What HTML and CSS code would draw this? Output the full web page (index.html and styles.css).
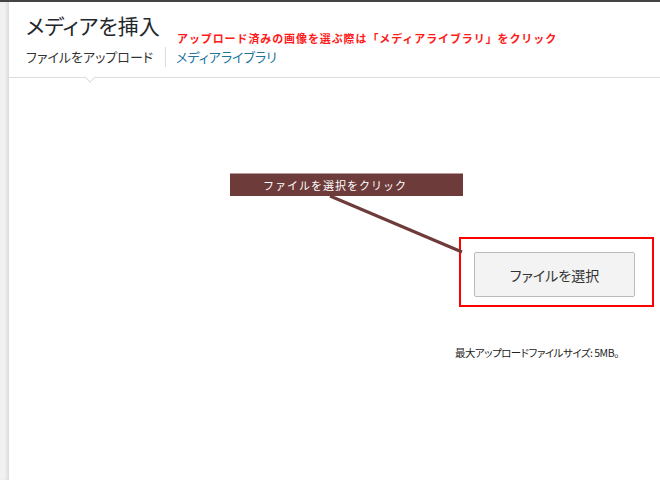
FILE: index.html
```html
<!DOCTYPE html>
<html lang="ja">
<head>
  <meta charset="UTF-8" />
  <title>メディアを挿入</title>
  <link rel="stylesheet" href="styles.css">
</head>
<body>

  <div class="topbar"></div>

  <div class="frame">
    <div class="gutter"></div>

    <div class="modal">
      <!-- header -->
      <div class="modal-head">
        <div class="title-row">
          <h1>メディアを挿入</h1>
          <span class="note">アップロード済みの画像を選ぶ際は「メディアライブラリ」をクリック</span>
        </div>
        <div class="tabs">
          <span class="tab active">ファイルをアップロード</span>
          <span class="tab-sep"></span>
          <span class="tab link">メディアライブラリ</span>
        </div>
      </div>

      <!-- upload area -->
      <div class="upload">
        <div class="highlight">
          <button class="select-btn">ファイルを選択</button>
        </div>
        <p class="max-size">最大アップロードファイルサイズ: 5MB。</p>
      </div>

      <!-- annotation -->
      <div class="callout">ファイルを選択をクリック</div>
      <svg class="pointer" width="660" height="480" viewBox="0 0 660 480">
        <line x1="330" y1="196" x2="462" y2="252" stroke="#6e3a3a" stroke-width="3" />
      </svg>
    </div>
  </div>

</body>
</html>
```

FILE: styles.css
```css
body {
  margin: 0;
  font-family: "Noto Sans CJK JP", "Noto Sans", sans-serif;
  background-color: #fff;
  color: #333;
  height: 480px;
  overflow: hidden;
}

.topbar {
  height: 2px;
  background-color: #444;
}

.frame {
  display: flex;
  height: 478px;
}

.gutter {
  width: 8px;
  background-color: #f1f1f1;
  box-shadow: inset -2px 0 2px rgba(0, 0, 0, 0.06);
}

.modal {
  flex: 1;
  border-left: 1px solid #ddd;
  background-color: white;
}

.modal-head {
  border-bottom: 1px solid #ddd;
  position: relative;
}

.title-row {
  display: flex;
  align-items: flex-end;
  padding-left: 17px;
  height: 44px;
}

h1 {
  flex: 0 0 151px;
  margin: 0;
  font-size: 21px;
  font-weight: normal;
  color: #23282d;
  line-height: 30px;
  padding-bottom: 6px;
  font-feature-settings: "palt";
}

.note {
  color: #ff1a1a;
  font-size: 11px;
  font-weight: bold;
  letter-spacing: 0.9px;
  line-height: 14px;
  padding-bottom: 1px;
  white-space: nowrap;
}

.tabs {
  display: flex;
  align-items: flex-start;
  padding: 1px 0 0 17px;
  height: 30px;
}

.tab {
  font-size: 13px;
  line-height: 20px;
  font-feature-settings: "palt";
}

.tab.active {
  color: #333;
  position: relative;
}

/* little caret under the active tab */
.tab.active::after {
  content: "";
  position: absolute;
  left: 50%;
  top: 26px;
  width: 7px;
  height: 7px;
  margin-left: -4px;
  background: white;
  border-right: 1px solid #ddd;
  border-bottom: 1px solid #ddd;
  transform: rotate(45deg);
}

.tab.link {
  color: #21759b;
}

.tab-sep {
  width: 1px;
  height: 20px;
  background-color: #ddd;
  margin: 0 10px 0 12px;
}

.upload {
  padding-top: 159px;
}

.highlight {
  margin-left: 450px;
  border: 2px solid #ff0000;
  padding: 13px 17px 8px 13px;
  width: 161px;
}

.select-btn {
  display: block;
  width: 161px;
  height: 45px;
  background-color: #f3f3f3;
  border: 1px solid #bbb;
  border-radius: 2px;
  font-family: inherit;
  font-size: 14px;
  color: #333;
  font-feature-settings: "palt";
  cursor: pointer;
}

.max-size {
  margin: 38px 0 0 446px;
  font-size: 10.5px;
  letter-spacing: -0.5px;
  color: #222;
  font-feature-settings: "palt";
  white-space: nowrap;
}

.callout {
  position: absolute;
  left: 230px;
  top: 173px;
  width: 200px;
  height: 22px;
  padding-left: 33px;
  border-top: 1px solid #b99a9a;
  background-color: #6e3b3b;
  color: white;
  font-size: 11px;
  letter-spacing: 1px;
  line-height: 22px;
}

.pointer {
  position: absolute;
  left: 0;
  top: 0;
  pointer-events: none;
}
```
